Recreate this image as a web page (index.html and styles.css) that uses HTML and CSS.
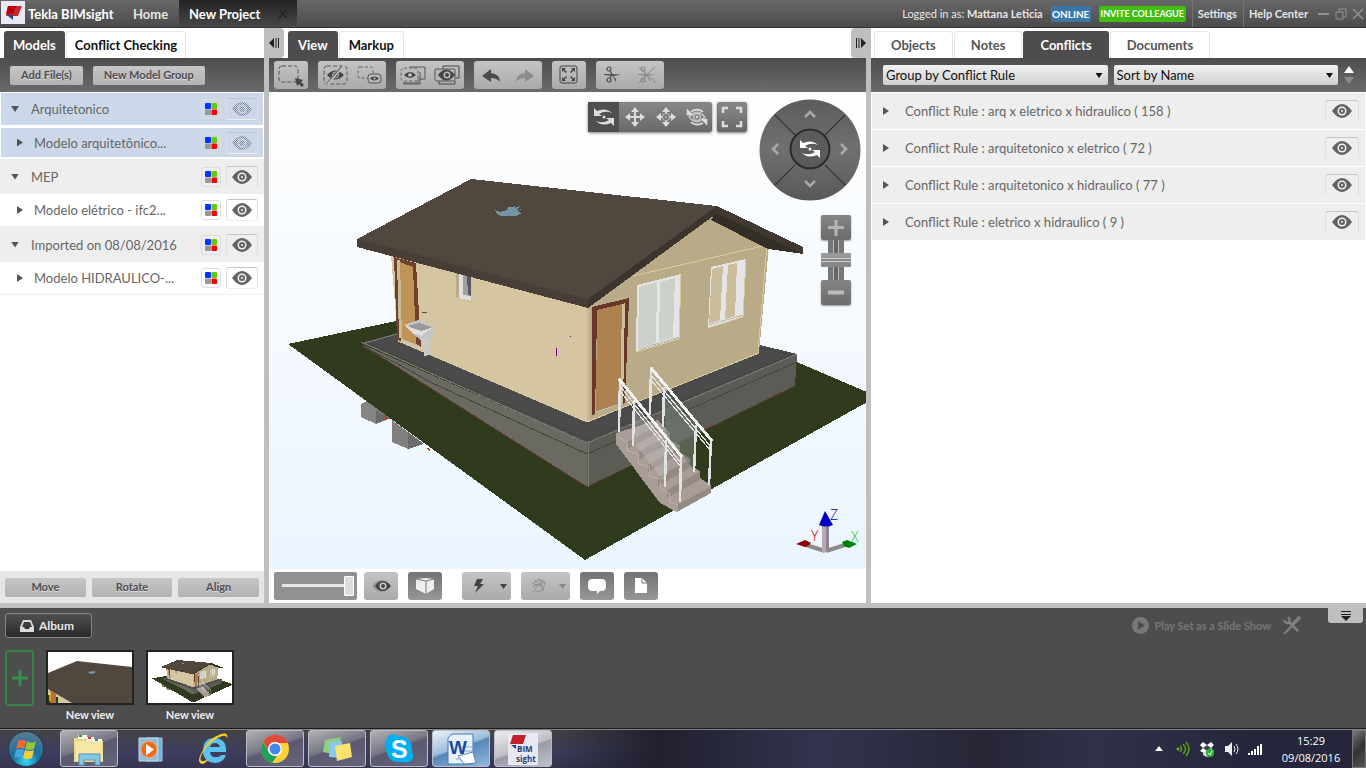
FILE: index.html
```html
<!DOCTYPE html>
<html lang="en">
<head>
<meta charset="utf-8">
<title>Tekla BIMsight</title>
<link rel="stylesheet" href="styles.css">
</head>
<body>
<svg class="defs" aria-hidden="true">
  <defs>
    <pattern id="dots" width="2" height="2" patternUnits="userSpaceOnUse"><rect width="1" height="1" fill="#80868e"/><rect x="1" y="1" width="1" height="1" fill="#80868e"/></pattern>
    <linearGradient id="sky" x1="0" y1="0" x2="0" y2="1"><stop offset="0" stop-color="#fefefe"/><stop offset="1" stop-color="#ebf5fe"/></linearGradient>
    <linearGradient id="wheel" x1="0" y1="0" x2="0" y2="1"><stop offset="0" stop-color="#5c5c5c"/><stop offset=".5" stop-color="#707070"/><stop offset="1" stop-color="#585858"/></linearGradient>
    <radialGradient id="orb" cx=".5" cy=".85" r=".85"><stop offset="0" stop-color="#35d8f5"/><stop offset=".45" stop-color="#1b6f9f"/><stop offset="1" stop-color="#5e7c90"/></radialGradient>
  </defs>
  <symbol id="eye" viewBox="0 0 20 14"><path d="M0 7Q5 0 10 0t10 7q-5 7-10 7T0 7z" fill="currentColor"/><circle cx="10" cy="7" r="4.500" fill="#f2f2f2"/><circle cx="10" cy="7" r="3" fill="currentColor"/><circle cx="10" cy="7" r="1" fill="#f2f2f2"/></symbol>
  <symbol id="eye-off" viewBox="0 0 20 14"><path d="M0 7Q5 0 10 0t10 7q-5 7-10 7T0 7z" fill="url(#dots)"/><circle cx="10" cy="7" r="4.500" fill="#ccd8e9"/><circle cx="10" cy="7" r="3" fill="url(#dots)"/></symbol>
  <symbol id="colors" viewBox="0 0 12 12"><rect width="6" height="6" rx="1" fill="#0433ff"/><rect x="6.500" width="5.500" height="6" rx="1" fill="#62cc00"/><rect y="6.500" width="6" height="5.500" rx="1" fill="#979797"/><rect x="6.500" y="6.500" width="5.500" height="5.500" rx="1" fill="#f00"/></symbol>
  <symbol id="orbit" viewBox="0 0 24 24"><path d="M2 3v8h8L7 9Q13 5 20 8 14 2 5 6zM22 21v-8h-8l3 2Q11 19 4 16q6 6 15 2z" fill="currentColor"/><circle cx="12" cy="12" r="1.500" fill="currentColor"/></symbol>
  <symbol id="pan" viewBox="0 0 24 24"><path d="M12 2l4 5h-3v4h4V8l5 4-5 4v-3h-4v4h3l-4 5-4-5h3v-4H7v3l-5-4 5-4v3h4V7H8z" fill="currentColor"/></symbol>
  <symbol id="move" viewBox="0 0 24 24"><path d="M12 2l4 5h-3v2h-2V7H8zM22 12l-5 4v-3h-2v-2h2V8zM12 22l-4-5h3v-2h2v2h3zM2 12l5-4v3h2v2H7v3z" fill="currentColor"/><circle cx="12" cy="12" r="3.500" fill="none" stroke="#b5b5b5" stroke-width="1.200"/><circle cx="12" cy="12" r="1" fill="#b5b5b5"/></symbol>
  <symbol id="look" viewBox="0 0 28 24"><g fill="none" stroke="#c0c0c0"><path d="M5 12q9-11 18 0-9 11-18 0z" stroke-width="2"/><circle cx="14" cy="12" r="4" stroke-width="2"/></g><g fill="none" stroke="currentColor"><path d="M7 6q7-5 14 0M21 19q-8 4-14-1" stroke-width="2"/></g><path d="M2 2v8h8zM26 22v-8h-8z" fill="currentColor"/><circle cx="14" cy="12" r="1.500" fill="currentColor"/></symbol>
  <symbol id="frame" viewBox="0 0 24 24"><path d="M8 3H3v5M16 3h5v5M8 21H3v-5M16 21h5v-5" fill="none" stroke="currentColor" stroke-width="2.500"/></symbol>
  <symbol id="scissors" viewBox="0 0 20 20"><g fill="none" stroke="currentColor" stroke-width="1.200"><circle cx="6" cy="4" r="2"/><circle cx="6" cy="15" r="2"/><path d="M7 6l3 5M7 13l2-4"/></g><path d="M1 9l17 .5L11 11 1 10zM9 10l4 7 0-3z" fill="currentColor"/></symbol>

  <symbol id="house" viewBox="269 92 597 477">
    <g shape-rendering="crispEdges">
    <path d="M361 404l6-3 24 17-15 6-15-7z" fill="#858585"/><path d="M376 410v14l14-6z" fill="#6a6a6a"/>
    <path d="M392 420l32 24-16 5-16-7z" fill="#808080"/><path d="M408 432v17l16-5z" fill="#6c6c6c"/>
    <path d="M385 415l3 4-2 1zM427 448l3 1v3z" fill="#d42800"/>
    <path d="M288 344l108-23 401 41 72 31v8L585 560z" fill="#303a1d"/>
    <path d="M361 343l36-10 363 12 37 9-210 89z" fill="#4b4b4b"/>
    <path d="M361 344l226 99v44l-27-17z" fill="#6b6a62"/>
    <path d="M587 443l210-89-2 32-208 101z" fill="#5b5c55"/>
    <g fill="none" stroke-width="1"><path d="M362 345l198 125 27 17 208-101" stroke="#5a3a2b"/><path d="M363 347q35 16 67 35l157 72 210-92M760 348l32 7-205 84-222-97" stroke="#444540"/><path d="M361 342l226 101 210-89M588 443v44M397 334l-32 9" stroke="#7c7b73"/></g>
    <path d="M391 255l197 52-1 115-189-81z" fill="#d5c5a0"/>
    <path d="M587 304l126-92 56 33-10 108-172 69z" fill="#b9ab88"/>
    <path d="M587 308v114l3-1v-114z" fill="#c7b993"/>
    <path d="M633 276l134-31-9 108M398 341l189 81 172-69" fill="none" stroke="#d8c99e"/>
    <path d="M394 257l22 6 5 84-5-2-3-75-13-4 1 75-4-1z" fill="#6e402e"/><path d="M400 262l13 5 3 78-15-6z" fill="#c09356"/><path d="M397 260h3l2 79-3-1z" fill="#c9bd96"/>
    <path d="M401 339l18 7" stroke="#bfc0bd"/>
    <path d="M456 273l15 4v25l-15-5z" fill="#b9ab88"/><path d="M459 274l12 3v24l-12-3z" fill="#dfdfdf"/><path d="M463 275l8 2v19l-8-1z" fill="#a0a0a0"/><path d="M467 276l4 1v19l-3-2z" fill="#585a59"/>
    <path d="M592 307l37-9-4 105-3 1 2-97-27 7-2 100-3 1z" fill="#67382a"/><path d="M597 310l25-6-2 101-24 7z" fill="#ad8251"/><path d="M622 304l3-1-2 101-3 1z" fill="#cec09c"/><path d="M596 412l24-8" stroke="#c2c3b9"/>
    <path d="M637 285l44-11-2 64-43 13z" fill="#e3e4e4"/><path d="M639 287l18-5-1 61-18 5zM660 282l15-4-2 59-14 5z" fill="#cdd1cc"/><path d="M681 275l-2 64-43 13" fill="none" stroke="#d8c99e"/>
    <path d="M711 267l35-8-3 57-35 12z" fill="#e5e5e6"/><path d="M712 269l11-3-3 54-11 4zM728 265l9-2-2 53-10 3z" fill="#c9bd9c"/><path d="M746 259l-3 58-35 11" fill="none" stroke="#d8c99e"/>
    <path d="M639 349l40-12M709 325l34-10" stroke="#b8b9b8"/>
    <path d="M471 179l246 27-129 93-231-60z" fill="#50473f"/><path d="M357 239l231 60v9l-231-61z" fill="#473e37"/><path d="M588 299l129-93-1 8-128 94z" fill="#3c352f"/>
    <path d="M717 206l86 41v7l-35-10-52-30z" fill="#403831"/><path d="M716 213l87 41-35-5-57-29z" fill="#342e28"/>
    <path d="M495 210l5 2 9-3-5-1 9-1 2-2v3l5-2-3 4 5-1-5 3 5 1-6 3h-14q-6-1-7-6z" fill="#7696a6"/>
    <path d="M422 313l5-1" stroke="#4d5135"/><path d="M556.500 348v8M570 336.500h1" stroke="#73008b"/>
    <path d="M404 325l14-5 16 6v12l-12 3-10-8z" fill="#c5c5c5"/><path d="M408 326l11-3 13 4-11 5z" fill="#999"/><path d="M404 325l17 6 12-4-12 9-9-3z" fill="#dedede"/><path d="M423 338h6v17l-5 1z" fill="#c9c9cb"/>
    <path d="M616 433l42-13 12 13v7l10 5v7l10 7v6l10 6v7l11 7v8l-34 19-17-9-44-59z" fill="#aa9d98"/>
    <path d="M627 442l31-17v8l-31 16zM638 452l32-17v8l-32 17zM648 465l32-18v7l-32 18zM658 477l32-17v8l-32 18zM667 490l33-18v8l-33 18zM678 504l33-17v6l-33 18z" fill="#958984"/>
    <path d="M618 436l9 7v8l11 3 1 10 10 3v9l11 3v9l9 5v9l9 3" fill="none" stroke="#beaea9"/>
    <path d="M663 387l33 40-2 44-28-38z" fill="#737b77" opacity=".6"/><path d="M633 403l33 38-1 42-31-40z" fill="#ced0cc" opacity=".3"/>
    <g fill="none" stroke="#e0e3e4" stroke-width="2.500"><path d="M651 367l-1 48M664 387l-1 40M696 425l-2 47M711 440l-2 45M620 378l-1 54M634 400l-1 46M666 440l-1 47M681 457l-1 45"/></g>
    <path d="M651 368l61 73M619 379l63 78" stroke="#f3f4f4" stroke-width="3"/><path d="M651 375l60 72M651 380l60 71M620 386l61 77M620 391l61 76" stroke="#e5e7e7" stroke-width="1.200"/>
    </g>
  </symbol>
</svg>

<header class="titlebar">
  <svg class="logo" viewBox="0 0 24 23"><path d="M0 0h24v23H0z" fill="#e9e8f4"/><path d="M7 5h14l-4 10H5z" fill="#c8252d"/><path d="M7 5h8l-3 8H5z" fill="#b70008"/><path d="M6 14h6v5z" fill="#174b8c"/></svg>
  <span class="product">Tekla BIMsight</span>
  <a class="home" href="#">Home</a>
  <div class="project"><span>New Project</span><button class="close" aria-label="Close project"><svg viewBox="0 0 10 10"><path d="M1 1l8 8M9 1L1 9" stroke="#222" stroke-width="1.500"/></svg></button></div>
  <div class="account">
    <span class="logged">Logged in as: <b>Mattana Leticia</b></span>
    <button class="badge online">ONLINE</button><button class="badge invite">INVITE COLLEAGUE</button>
    <a href="#" class="link">Settings</a><a href="#" class="link">Help Center</a>
    <div class="window-buttons">
      <button aria-label="Minimize"><svg viewBox="0 0 12 12"><path d="M0 6h11" stroke="#919191" stroke-width="2"/></svg></button>
      <button aria-label="Restore"><svg viewBox="0 0 12 12"><path d="M1 4h7v7H1zM4 4V1h7v8H8" fill="none" stroke="#919191"/></svg></button>
      <button aria-label="Close"><svg viewBox="0 0 12 12"><path d="M1 1l10 10M11 1L1 11" stroke="#919191" stroke-width="1.500"/></svg></button>
    </div>
  </div>
</header>

<main class="workspace">
  <section class="panel models">
    <nav class="tabs"><button class="tab active">Models</button><button class="tab">Conflict Checking</button></nav>
    <div class="bar actions"><button class="btn">Add File(s)</button><button class="btn">New Model Group</button></div>
    <ul class="tree">
      <li class="row group selected"><i class="open-mark"></i><span>Arquitetonico</span><button class="ico" aria-label="Color"><svg><use href="#colors"/></svg></button><button class="see" aria-label="Show"><svg><use href="#eye-off"/></svg></button></li>
      <li class="row child selected"><i class="closed-mark"></i><span>Modelo arquitetônico...</span><button class="ico" aria-label="Color"><svg><use href="#colors"/></svg></button><button class="see" aria-label="Show"><svg><use href="#eye-off"/></svg></button></li>
      <li class="row group"><i class="open-mark"></i><span>MEP</span><button class="ico" aria-label="Color"><svg><use href="#colors"/></svg></button><button class="see" aria-label="Hide"><svg><use href="#eye"/></svg></button></li>
      <li class="row child"><i class="closed-mark"></i><span>Modelo elétrico - ifc2...</span><button class="ico" aria-label="Color"><svg><use href="#colors"/></svg></button><button class="see" aria-label="Hide"><svg><use href="#eye"/></svg></button></li>
      <li class="row group"><i class="open-mark"></i><span>Imported on 08/08/2016</span><button class="ico" aria-label="Color"><svg><use href="#colors"/></svg></button><button class="see" aria-label="Hide"><svg><use href="#eye"/></svg></button></li>
      <li class="row child"><i class="closed-mark"></i><span>Modelo HIDRAULICO-...</span><button class="ico" aria-label="Color"><svg><use href="#colors"/></svg></button><button class="see" aria-label="Hide"><svg><use href="#eye"/></svg></button></li>
    </ul>
    <div class="transform"><button class="btn">Move</button><button class="btn">Rotate</button><button class="btn">Align</button></div>
  </section>

  <div class="splitter"><button class="handle to-left" aria-label="Collapse models"><svg viewBox="0 0 12 12"><path d="M6 1v10L1 6z" fill="#222"/><path d="M8 1v10M10.500 1v10" stroke="#222"/></svg></button></div>

  <section class="panel view">
    <nav class="tabs"><button class="tab active">View</button><button class="tab">Markup</button></nav>
    <div class="bar tools">
      <button class="tool" aria-label="Select area"><svg viewBox="0 0 34 28"><rect x="5" y="5" width="19" height="16" rx="3" fill="none" stroke="#555" stroke-dasharray="4 2"/><path d="M21 17l8 2-2 2 3 3-2 2-3-3-2 2z" fill="#444"/></svg></button>
      <div class="pair"><button class="tool" aria-label="Hide selected"><svg viewBox="0 0 34 28"><rect x="6" y="5" width="23" height="18" rx="3" fill="none" stroke="#555" stroke-dasharray="4 2"/><path d="M9 14q8-9 17 0-9 9-17 0z" fill="#444"/><circle cx="17.500" cy="14" r="3" fill="none" stroke="#bbb"/><path d="M25 5L9 23" stroke="#bbb" stroke-width="3"/><path d="M24 5L9 22" stroke="#444"/></svg></button><button class="tool" aria-label="Show only selected"><svg viewBox="0 0 34 28"><rect x="6" y="6" width="15" height="11" rx="2" fill="none" stroke="#666" stroke-dasharray="3 2"/><rect x="16" y="13" width="13" height="9" rx="3" fill="#b8b8b8" stroke="#555"/><path d="M18 17.500q4-4 9 0-5 4-9 0z" fill="#444"/><circle cx="22.500" cy="17.500" r="1" fill="#ccc"/></svg></button></div>
      <div class="pair"><button class="tool" aria-label="Show hidden"><svg viewBox="0 0 34 28"><path d="M14 10V6h15v12h-5M8 22h14v-5" fill="none" stroke="#555"/><path d="M8 21v2h16V11" fill="none" stroke="#555"/><rect x="5" y="7" width="17" height="13" rx="3" fill="#b8b8b8" stroke="#666" stroke-dasharray="3 2"/><path d="M8 14q6-6 12 0-6 6-12 0z" fill="#444"/><circle cx="14" cy="14" r="1.800" fill="#ccc"/></svg></button><button class="tool" aria-label="Show all"><svg viewBox="0 0 34 28"><path d="M13 8V5h16v12h-3M9 20v3h16v-3" fill="none" stroke="#444"/><rect x="5" y="8" width="20" height="12" rx="1" fill="#b8b8b8" stroke="#555"/><path d="M8 14q8-11 17 0-9 11-17 0z" fill="#444"/><circle cx="17" cy="14" r="3.500" fill="#bbb"/><circle cx="17" cy="14" r="2" fill="#444"/></svg></button></div>
      <div class="pair"><button class="tool" aria-label="Undo"><svg viewBox="0 0 34 28"><path d="M8 15l9-7v4q9 1 9 9-3-4-9-4v4z" fill="#4c4c4c"/></svg></button><button class="tool" aria-label="Redo"><svg viewBox="0 0 34 28"><path d="M26 15l-9-7v4q-9 1-9 9 3-4 9-4v4z" fill="#8c8c8c"/></svg></button></div>
      <button class="tool" aria-label="Fit view"><svg viewBox="0 0 34 28"><rect x="8" y="5" width="17" height="17" rx="2" fill="none" stroke="#444"/><path d="M10 7h4l-1.500 1.500L15 11l-1 1-2.500-2.500L10 11zM23 7v4l-1.500-1.500L19 12l-1-1 2.500-2.500L19 7zM10 20v-4l1.500 1.500L14 15l1 1-2.500 2.500L14 20zM23 20h-4l1.500-1.500L18 16l1-1 2.500 2.500L23 16z" fill="#444"/></svg></button>
      <div class="pair"><button class="tool dark" aria-label="Clip"><svg viewBox="-7 -4 34 28"><use href="#scissors" width="20" height="20"/></svg></button><button class="tool faded" aria-label="Remove clip"><svg viewBox="-7 -4 34 28"><use href="#scissors" width="20" height="20"/><path d="M2 2l17 16M18 2L2 18" stroke="currentColor"/></svg></button></div>
    </div>
    <div class="viewport">
      <svg class="scene" viewBox="269 92 597 477" preserveAspectRatio="xMidYMid slice">
        <path d="M269 92h597v477H269z" fill="url(#sky)"/>
        <use href="#house" x="269" y="92" width="597" height="477"/>
        <path d="M825 551l-22-7M826 551l22-7" stroke="#8e8989" stroke-width="4"/><path d="M822 526h7v26h-7z" fill="#b4a9b4"/><path d="M826 526h3v26h-3z" fill="#8f858f"/><path d="M825 511l8 14q-7 3-14 0z" fill="#0000c4"/><path d="M796 544l9-4 6 3-3 3-3 1z" fill="#8e0000"/><path d="M857 544l-10-4-5 2 2 4 5 2z" fill="#008200"/>
        <text x="830" y="520" class="axis z">Z</text><text x="811" y="541" class="axis y">Y</text><text x="851" y="542" class="axis x">X</text>
      </svg>
      <div class="nav-tools"><div class="nav-group"><button class="pressed" aria-label="Orbit"><svg><use href="#orbit"/></svg></button><button aria-label="Pan"><svg><use href="#pan"/></svg></button><button aria-label="Move"><svg><use href="#move"/></svg></button><button aria-label="Look"><svg><use href="#look"/></svg></button></div><div class="nav-group single"><button aria-label="Full screen"><svg><use href="#frame"/></svg></button></div></div>
      <svg class="wheel" viewBox="0 0 102 102"><circle cx="51" cy="51" r="50.500" fill="url(#wheel)"/><path d="M16 16l20 20M86 16L66 36M16 86l20-20M86 86L66 66" stroke="#3a3a3a" stroke-width="1.500"/><circle cx="51" cy="50" r="19.500" fill="#5b5b5b" stroke="#2b2b2b" stroke-width="2"/><path d="M46 18l5-5 5 5M46 82l5 5 5-5M19 45l-5 5 5 5M82 45l5 5-5 5" fill="none" stroke="#aaa" stroke-width="2.500"/><use href="#orbit" x="39" y="38" width="24" height="24" color="#fff"/></svg>
      <div class="zoomer"><button aria-label="Zoom in"><svg viewBox="0 0 30 25"><path d="M7 12.500h16M15 5v16" stroke="#b5b5b5" stroke-width="3"/></svg></button><input type="range" aria-label="Zoom" value="50"><button aria-label="Zoom out"><svg viewBox="0 0 30 25"><path d="M7 12.500h16" stroke="#bdbdbd" stroke-width="4"/></svg></button></div>
    </div>
    <div class="view-bar">
      <div class="slider"><input type="range" aria-label="Transparency" value="100"></div>
      <button class="tool dark" aria-label="Visibility"><svg viewBox="0 0 34 28"><path d="M8 14q4-6 9-6 6 0 9 6-3 6-9 6-5 0-9-6z" fill="#999"/><path d="M11 14q3-5 8-5 4 0 8 5-4 5-8 5-5 0-8-5z" fill="#444"/><circle cx="19" cy="14" r="3.500" fill="#ccc"/><circle cx="19" cy="14" r="2" fill="#444"/></svg></button>
      <button class="tool deep" aria-label="Perspective"><svg viewBox="0 0 34 28"><path d="M8 7l9-1 9 1v10l-8 5-10-5z" fill="#eee"/><path d="M8 7l10 2 8-2M18 9v13" stroke="#777" fill="none"/></svg></button>
      <button class="tool split first" aria-label="Conflict display"><svg viewBox="0 0 49 28"><path d="M15 7h6l-3 5h4l-9 9 3-7h-4z" fill="#444"/><path d="M38 12h7l-3.500 5z" fill="#444"/></svg></button>
      <button class="tool split" aria-label="Measure"><svg viewBox="0 0 49 28"><path d="M11 12l7-5 6 3-2 8-7 2M14 8l9 10M18 7l4 12M12 15l12-5M12 12l10 1M12 20l10-12" fill="none" stroke="#8f8f8f"/><path d="M38 12h7l-3.500 5z" fill="#8a8a8a"/></svg></button>
      <button class="tool deep" aria-label="Notes"><svg viewBox="0 0 34 28"><path d="M12 7h10q4 0 4 5v2q0 5-4 5h-2l-3 3v-3h-5q-4 0-4-5v-2q0-5 4-5z" fill="#fff"/></svg></button>
      <button class="tool deep" aria-label="Documents"><svg viewBox="0 0 34 28"><path d="M11 6h7l5 5v10H11z" fill="#fff"/><path d="M18 6v5h5" fill="none" stroke="#777"/></svg></button>
    </div>
  </section>

  <div class="splitter"><button class="handle to-right" aria-label="Collapse conflicts"><svg viewBox="0 0 12 12"><path d="M6 1v10l5-5z" fill="#222"/><path d="M4 1v10M1.500 1v10" stroke="#222"/></svg></button></div>

  <section class="panel conflicts">
    <nav class="tabs"><button class="tab">Objects</button><button class="tab">Notes</button><button class="tab active">Conflicts</button><button class="tab">Documents</button></nav>
    <div class="bar filters">
      <div class="select"><select aria-label="Group by"><option>Group by Conflict Rule</option></select></div>
      <div class="select"><select aria-label="Sort by"><option>Sort by Name</option></select></div>
      <div class="order"><button class="up" aria-label="Ascending"></button><button class="dn" aria-label="Descending"></button></div>
    </div>
    <ul class="rules">
      <li><i class="closed-mark"></i><span>Conflict Rule : arq x eletrico x hidraulico ( 158 )</span><button class="see" aria-label="Hide"><svg><use href="#eye"/></svg></button></li>
      <li><i class="closed-mark"></i><span>Conflict Rule : arquitetonico x eletrico ( 72 )</span><button class="see" aria-label="Hide"><svg><use href="#eye"/></svg></button></li>
      <li><i class="closed-mark"></i><span>Conflict Rule : arquitetonico x hidraulico ( 77 )</span><button class="see" aria-label="Hide"><svg><use href="#eye"/></svg></button></li>
      <li><i class="closed-mark"></i><span>Conflict Rule : eletrico x hidraulico ( 9 )</span><button class="see" aria-label="Hide"><svg><use href="#eye"/></svg></button></li>
    </ul>
  </section>
</main>

<section class="album">
  <div class="album-head">
    <button class="album-btn"><svg viewBox="0 0 14 12"><path d="M3 0h8l3 7v5H0V7zM4 2L2 7h2l1 2h4l1-2h2l-2-5z" fill="#ddd" fill-rule="evenodd"/></svg>Album</button>
    <button class="play"><svg viewBox="0 0 17 17"><circle cx="8.500" cy="8.500" r="8.500" fill="#787878"/><path d="M6 4l7 4.500L6 13z" fill="#4d4d4d"/></svg>Play Set as a Slide Show</button>
    <button class="settings" aria-label="Slide show settings"><svg viewBox="0 0 18 18"><path d="M5 5l10 10" stroke="#808080" stroke-width="2.500"/><path d="M1 4q1 4 5 3 2-3-1-6" fill="none" stroke="#808080" stroke-width="2"/><path d="M17 1L9 9" stroke="#808080" stroke-width="3.500"/><path d="M9 10l-8 8" stroke="#808080" stroke-width="2"/></svg></button>
    <button class="fold" aria-label="Collapse album"><svg viewBox="0 0 12 10"><path d="M1 .5h10M1 3.500h10" stroke="#222"/><path d="M1 5h10L6 10z" fill="#222"/></svg></button>
  </div>
  <div class="views">
    <button class="add" aria-label="Add view"><svg viewBox="0 0 16 16"><path d="M8 0v16M0 8h16" stroke="#369048" stroke-width="3"/></svg></button>
    <figure><svg viewBox="0 0 84 51" preserveAspectRatio="none"><path d="M0 0h84v51H0z" fill="#fff"/><path d="M0 36l24 15H0z" fill="#d5c5a0"/><path d="M2 38l6 4v9H2z" fill="#b56f37"/><path d="M0 43h2v8H0zM8 45h2v6H8z" fill="#303a1d"/><path d="M2 40v9" stroke="#ff0"/><path d="M0 21L29 9l55 6v36H24L0 37z" fill="#50473f"/><path d="M39 20l8-1v2l-4 1z" fill="#7696a6"/></svg><figcaption>New view</figcaption></figure>
    <figure><svg viewBox="259 108 608 455" preserveAspectRatio="none"><path d="M259 108h608v455H259z" fill="#fff"/><use href="#house" x="269" y="92" width="597" height="477"/></svg><figcaption>New view</figcaption></figure>
  </div>
</section>

<footer class="taskbar">
  <button class="start" aria-label="Start"><svg viewBox="0 0 36 36"><circle cx="18" cy="18" r="17.500" fill="url(#orb)" stroke="#263846"/><path d="M10 10q4-2 8 0l-2 8q-4-2-8 0z" fill="#ef6a35"/><path d="M19 10q5 3 9 0l-2 8q-4 2-9 0z" fill="#8fc73e"/><path d="M8 19q4-2 8 0l-2 8q-4-2-8 0z" fill="#45a6e0"/><path d="M17 19q4 2 9 0l-2 8q-5 2-9 0z" fill="#fccb38"/></svg></button>
  <button class="task open" aria-label="Explorer"><svg viewBox="0 0 34 34"><path d="M2 6h10l2 3h17v21H2z" fill="#eed682"/><path d="M6 3h9v4H6zM14 5h8v4h-8zM22 7h8v4h-8z" fill="#f9f9f0"/><path d="M7 3h3v2H7z" fill="#25a12c"/><path d="M16 5h3v2h-3z" fill="#e43b20"/><path d="M23 7h3v2h-3z" fill="#2c8dd1"/><path d="M3 9h26l2 20H4z" fill="#f6e7a5"/><path d="M7 33V22h21v11h-5v-5H12v5z" fill="#86c8e4" stroke="#4d96ba"/></svg></button>
  <button class="task" aria-label="Media player"><svg viewBox="0 0 34 34"><path d="M12 6h16v23H12z" fill="#6fb1d6" stroke="#9bd0ea"/><path d="M5 6h19v23H5z" fill="#96bdd6" stroke="#bbdced"/><circle cx="15" cy="17.500" r="8" fill="#ee6815" stroke="#f8a35d"/><path d="M12 12l8 5.500-8 6z" fill="#fff"/></svg></button>
  <button class="task" aria-label="Internet Explorer"><svg viewBox="0 0 34 34"><path d="M30 20H14q1 6 6 5 4 0 5-2h5q-3 8-11 8-12-1-12-12Q7 6 19 6q12 1 11 14zm-6-5q-1-4-5-4t-5 4z" fill="#5bc1ee" fill-rule="evenodd"/><path d="M6 32q-6-2 0-12Q13 6 25 2q8-2 6 5 0-4-5-3Q13 9 6 22q-4 8 2 7 3-1 5-2-4 5-7 5z" fill="#f8cf24"/></svg></button>
  <button class="task open" aria-label="Chrome"><svg viewBox="0 0 34 34"><circle cx="17" cy="17" r="14" fill="#ffd03b"/><path d="M5 10A14 14 0 0 1 30 11H17L12 21z" fill="#de4b3d"/><path d="M5 10l7 12 7 2-5 7A14 14 0 0 1 5 10z" fill="#1ea05c"/><circle cx="17" cy="17" r="7" fill="#fff"/><circle cx="17" cy="17" r="5.500" fill="#4587ee"/></svg></button>
  <button class="task open" aria-label="Sticky notes"><svg viewBox="0 0 34 34"><path d="M5 8l16-3-3 18L3 20z" fill="#8ccf7e"/><path d="M10 10l12-1v17l-13-1z" fill="#8ac6ee"/><path d="M15 14l15-3 2 14-15 4z" fill="#f8e36c"/></svg></button>
  <button class="task open" aria-label="Skype"><svg viewBox="0 0 34 34"><path d="M8 3q4-2 8 1 12-1 14 11 0 3 0 5 3 5-1 9-4 3-9 1Q6 32 4 17q-2-10 4-14z" fill="#00aff0"/><text x="9" y="26" class="skype">S</text></svg></button>
  <button class="task open word" aria-label="Word"><svg viewBox="0 0 34 34"><path d="M8 2h21v30H4V6z" fill="#e9f1fa" stroke="#3d7abf"/><path d="M15 15h15M15 19h15M12 27h17" stroke="#8aa9d4"/><text x="5" y="22" class="w">W</text><path d="M14 24l15-4 3 11-12 1z" fill="#fff" stroke="#5985bd"/></svg></button>
  <button class="task open light" aria-label="BIMsight"><svg viewBox="0 0 34 34"><path d="M2 1h30v32H2z" fill="#e9e8f2"/><path d="M7 3h13l-3 9H4z" fill="#c41f28"/><path d="M5 13h5v4z" fill="#174b8c"/><text x="11" y="20" class="bim">BIM</text><text x="10" y="30" class="bim">sight</text></svg></button>
  <div class="tray">
    <svg class="caret" viewBox="0 0 8 5"><path d="M4 0l4 5H0z" fill="#fff"/></svg>
    <svg viewBox="0 0 16 16"><circle cx="3" cy="8" r="1.500" fill="#6eb817"/><path d="M5 5q3 3 0 6M8 3q5 5 0 10M11 1q6 7 0 14" fill="none" stroke="#5a9c15" stroke-width="1.500"/></svg>
    <svg viewBox="0 0 16 16"><path d="M4 1l4 3 4-3 3 3-3 3 3 3-4 2-3-2-3 2-4-2 3-3-3-3z" fill="#fff"/><path d="M4 12l4-2 4 2v2l-4 2-4-2z" fill="#ddd"/><path d="M8 4l4 3-4 3-4-3z" fill="#444"/><circle cx="11" cy="12" r="4" fill="#28b52e"/><path d="M9 12l2 2 2-4" fill="none" stroke="#fff"/></svg>
    <svg viewBox="0 0 16 16"><path d="M2 5h3l4-4v14l-4-4H2z" fill="#eee"/><path d="M11 5q2 3 0 6M13 3q4 5 0 10" fill="none" stroke="#eee"/></svg>
    <svg viewBox="0 0 16 16"><path d="M1 12h2v2H1zM4 10h2v4H4zM7 8h2v6H7zM10 5h2v9h-2zM13 3h2v11h-2z" fill="#fff"/></svg>
  </div>
  <time class="clock">15:29<br>09/08/2016</time>
  <button class="desktop" aria-label="Show desktop"></button>
</footer>
</body>
</html>
```
FILE: styles.css
```css
* { box-sizing: border-box; }
body { margin: 0; min-height: 100vh; display: flex; flex-direction: column; background: #fff; color: #666; font-family: Lato, "Open Sans", sans-serif; font-size: 13px; line-height: 16px; }
button, select, input { font: inherit; margin: 0; padding: 0; border: 0; background: none; color: inherit; }
a { color: inherit; text-decoration: none; }
ul { list-style: none; margin: 0; padding: 0; }
svg { display: block; }
.defs { position: absolute; width: 0; height: 0; }

/* Title bar */
.titlebar { display: flex; height: 28px; background: linear-gradient(#686868, #4b4b4b); border-bottom: 1px solid #333; color: #e6e6e6; font-size: 11px; font-weight: 700; align-items: center; }
.logo { width: 24px; height: 23px; margin: 0 3px 3px 1px; }
.product { width: 105px; font-size: 13px; color: #fff; white-space: nowrap; }
.home { width: 46px; font-size: 13px; }
.project { display: flex; align-items: center; justify-content: space-between; width: 118px; height: 27px; padding: 0 9px 0 10px; background: linear-gradient(#232323, #484848); color: #fff; font-size: 13px; }
.close svg { width: 10px; height: 10px; }
.account { display: flex; align-items: center; margin-left: auto; height: 27px; }
.logged { font-weight: 400; margin-right: 8px; }
.badge { height: 16px; border-radius: 2px; color: #fff; font-size: 10px; font-weight: 700; line-height: 16px; }
.online { width: 40px; background: #3a77a8; margin-right: 8px; }
.invite { width: 87px; background: #43bd0c; margin-right: 6px; font-size: 9px; }
.link { border-left: 1px solid #737373; height: 27px; line-height: 27px; padding: 0 6px 0 5px; white-space: nowrap; }
.window-buttons { display: flex; gap: 5px; padding: 0 2px 0 4px; }
.window-buttons svg { width: 12px; height: 12px; }

/* Three-column workspace */
.workspace { flex: 1; display: grid; grid-template-columns: 264px 5px minmax(0, 1fr) 5px 495px; }
.panel { display: flex; flex-direction: column; min-width: 0; }
.splitter { background: #bfbfbf; position: relative; z-index: 2; }
.handle { position: absolute; top: 0; width: 20px; height: 30px; background: #bfbfbf; display: flex; align-items: center; justify-content: center; }
.handle svg { width: 12px; height: 12px; }
.handle.to-left { left: 0; border-radius: 0 4px 4px 0; }
.handle.to-right { right: 0; border-radius: 4px 0 0 4px; }
.tabs { display: flex; align-items: flex-end; height: 30px; gap: 1px; padding-left: 4px; }
.view .tabs { padding-left: 19px; }
.conflicts .tabs { padding-left: 3px; }
.tab { height: 27px; padding: 0 8px; border: 1px solid #e6e6e6; border-bottom: 0; border-radius: 3px 3px 0 0; background: #fff; color: #111; font-size: 13px; font-weight: 700; white-space: nowrap; }
.tab.active { background: #4d4d4d; border-color: #4d4d4d; color: #fff; }
.view .tab { padding: 0 9px; }
.conflicts .tab { padding: 0 16px; color: #555; }
.conflicts .tab.active { color: #fff; }
.bar { display: flex; height: 34px; align-items: center; background: linear-gradient(#4d4d4d, #6b6b6b); }
.btn { height: 19px; border-radius: 2px; background: linear-gradient(#c6c6c6, #b2b2b2); color: #4e4e4e; font-size: 11px; font-weight: 700; text-shadow: 0 1px 0 #ddd; padding: 0 11px; white-space: nowrap; }
.actions { gap: 10px; padding-left: 10px; }

/* Model tree and rules */
.tree { flex: 1; }
.row { display: flex; align-items: center; padding: 0 6px 0 11px; }
.row span { flex: 1; min-width: 0; overflow: hidden; white-space: nowrap; margin-right: 22px; }
.row.group { height: 35px; background: #eee; }
.row.child { height: 33px; padding-left: 17px; border-bottom: 1px solid #eee; background: #fff; }
.row.selected { background: #ccd8e9; border: 1px solid #fff; border-bottom: 2px solid #fff; padding-right: 5px; padding-left: 10px; }
.row.child.selected { padding-left: 16px; height: 32px; }
.open-mark { width: 8px; height: 6px; background: #555; clip-path: polygon(0 0, 100% 0, 50% 100%); margin-right: 12px; }
.closed-mark { width: 6px; height: 8px; background: #555; clip-path: polygon(0 0, 100% 50%, 0 100%); margin-right: 11px; }
.ico, .see { display: flex; align-items: center; justify-content: center; border: 1px solid #ddd; border-radius: 3px; }
.ico { width: 20px; height: 20px; margin-right: 5px; }
.ico svg { width: 12px; height: 12px; }
.see { width: 32px; height: 22px; border-top-color: #c4c4c4; border-bottom-color: #eee; color: #636363; }
.see svg { width: 20px; height: 14px; }
.transform { display: grid; grid-template-columns: repeat(3, 1fr); gap: 6px; height: 32px; align-items: center; background: #e6e6e6; padding: 0 5px; }
.rules { padding: 1px 1px 0; }
.rules li { display: flex; align-items: center; height: 36px; margin-bottom: 1px; background: #eee; padding: 0 6px 0 11px; }
.rules .closed-mark { margin-right: 16px; }
.rules .see { width: 34px; margin-left: auto; }

/* View tools */
.tools { gap: 10px; padding-left: 5px; }
.pair { display: flex; background: linear-gradient(#c4c4c4, #aaa); border-radius: 3px; }
.tool { width: 34px; height: 28px; border-radius: 3px; background: linear-gradient(#c4c4c4, #aaa); }
.tool svg { width: 100%; height: 28px; }
.pair .tool { background: none; }
.tool.dark { color: #4c4c4c; }
.tool.faded { color: #8a8a8a; }
.tool.deep { background: linear-gradient(#737373, #979797); }
.tool.split { width: 49px; }
.tool.first { margin-left: 10px; }
.viewport { position: relative; flex: 1; min-height: 0; overflow: hidden; }
.scene { position: absolute; inset: 0; width: 100%; height: 100%; }
.axis { font-family: "Open Sans", sans-serif; font-size: 14px; font-weight: 300; }
.axis.z { fill: #0000c0; }
.axis.y { fill: #d00000; }
.axis.x { fill: #00c800; }
.nav-tools { position: absolute; top: 10px; right: 119px; display: flex; gap: 5px; }
.nav-group { display: flex; border-radius: 2px; background: linear-gradient(#888, #686868); box-shadow: 0 1px 3px #777; color: #ddd; }
.nav-group button { display: flex; align-items: center; justify-content: center; width: 31px; height: 30px; }
.nav-group.single button { width: 30px; }
.nav-group .pressed { background: #4f4f4f; }
.nav-group svg { width: 24px; height: 24px; }
.wheel { position: absolute; top: 7px; right: 5px; width: 102px; height: 102px; }
.zoomer { position: absolute; top: 123px; right: 15px; display: flex; flex-direction: column; width: 30px; }
.zoomer button { height: 25px; border-radius: 2px; background: linear-gradient(#858585, #6c6c6c); box-shadow: 0 1px 2px #999; }
.zoomer input { appearance: none; writing-mode: vertical-lr; width: 30px; height: 40px; background: linear-gradient(90deg, transparent 7px, #777 7px, #777 12px, #bbb 12px, #bbb 13px, #666 13px, #666 17px, #bbb 17px, #bbb 18px, #777 18px, #777 23px, transparent 23px); }
.zoomer input::-webkit-slider-thumb { appearance: none; width: 30px; height: 14px; border-radius: 1px; background: linear-gradient(#999 5px, #ccc 5px, #ccc 6px, #888 6px, #888 8px, #ccc 8px, #ccc 9px, #888 9px); }
.view-bar { display: flex; gap: 10px; align-items: center; height: 34px; padding-left: 5px; }
.slider { width: 83px; height: 28px; margin-right: -3px; padding: 0 3px 0 8px; border-radius: 2px; background: #919191; }
.slider input { appearance: none; display: block; width: 100%; height: 28px; background: linear-gradient(transparent 12px, #e8e8e8 12px, #e8e8e8 15px, transparent 15px); }
.slider input::-webkit-slider-thumb { appearance: none; width: 10px; height: 20px; border: 1px solid #fff; border-radius: 1px; background: #ddd; }

/* Filters */
.filters { gap: 6px; padding: 0 12px; }
.select { position: relative; flex: 1; }
.select::after { content: ""; position: absolute; right: 5px; top: 8px; width: 7px; height: 5px; background: #111; clip-path: polygon(0 0, 100% 0, 50% 100%); pointer-events: none; }
.select select { appearance: none; display: block; width: 100%; height: 20px; padding: 0 3px; border-radius: 2px; background: linear-gradient(#f2f2f2, #cfcfcf); color: #111; }
.order { display: flex; flex-direction: column; gap: 4px; width: 10px; }
.order button { height: 7px; background: #fff; clip-path: polygon(50% 0, 100% 100%, 0 100%); }
.order .dn { background: #8b8b8b; clip-path: polygon(0 0, 100% 0, 50% 100%); }

/* Album */
.album { height: 125px; border-top: 5px solid #bfbfbf; background: #4d4d4d; font-size: 11px; font-weight: 700; }
.album-head { display: flex; align-items: flex-start; padding: 0 3px 0 5px; }
.album-btn { display: flex; align-items: center; gap: 5px; width: 87px; height: 25px; margin-top: 5px; padding-left: 14px; border: 1px solid #848484; border-radius: 3px; background: linear-gradient(#505050, #292929); color: #e7e7e7; font-size: 12px; }
.album-btn svg { width: 14px; height: 12px; }
.play { display: flex; align-items: center; gap: 5px; margin: 9px 12px 0 auto; color: #777; }
.play svg { width: 17px; height: 17px; }
.settings { margin: 8px 27px 0 0; }
.settings svg { width: 18px; height: 18px; }
.fold { display: flex; align-items: center; justify-content: center; width: 35px; height: 15px; background: #bfbfbf; border-radius: 0 0 3px 3px; }
.fold svg { width: 12px; height: 10px; }
.views { display: flex; align-items: flex-start; gap: 12px; padding: 12px 5px 0; }
.add { display: flex; align-items: center; justify-content: center; width: 29px; height: 56px; border: 2px solid #338344; border-radius: 3px; }
.add svg { width: 16px; height: 16px; }
.views figure { width: 88px; margin: 0; text-align: center; color: #eee; }
.views figure svg { width: 88px; height: 55px; border: 2px solid #222; }
.views figcaption { margin-top: 2px; }

/* Taskbar */
.taskbar { display: flex; align-items: center; gap: 4px; height: 40px; padding-left: 8px; border-top: 1px solid #1b1b1b; box-shadow: inset 0 1px 0 #858585; background: linear-gradient(90deg, transparent 40%, #20202e 48%, #33334f 60%, #262636 72%, #30304a 80%, #25263b 92%), linear-gradient(#444, #3e3d5e 60%, #353450); }
.start { width: 36px; margin-right: 12px; }
.start svg { width: 36px; height: 36px; }
.task { display: flex; align-items: center; justify-content: center; width: 58px; height: 37px; }
.task svg { width: 34px; height: 34px; }
.task.open { border: 1px solid #bcbcc6; border-radius: 3px; background: linear-gradient(160deg, #b1b1b5, #777784 45%, #5a596f 50%, #66657a); }
.task.word { background: linear-gradient(160deg, #eef4fa, #9dbcda 45%, #5588b8 50%, #94b9de); }
.task.light { background: linear-gradient(160deg, #ededf2, #bdbdc3 50%, #9b9ba6 52%, #c0c0c9); }
.skype { font: 700 25px "Liberation Sans", sans-serif; fill: #fff; }
.w { font: 700 19px "Liberation Sans", sans-serif; fill: #174a9b; }
.bim { font: 700 8px "Open Sans", sans-serif; fill: #173b72; }
.tray { display: flex; align-items: center; gap: 8px; margin-left: auto; margin-right: 12px; }
.tray svg { width: 16px; height: 16px; }
.tray .caret { width: 8px; height: 5px; margin-right: 4px; }
.clock { width: 64px; text-align: center; color: #fff; font-family: "Open Sans", sans-serif; font-size: 11px; line-height: 17px; }
.desktop { width: 14px; height: 38px; margin-left: 5px; border: 1px solid #777; background: linear-gradient(135deg, #777, #333 50%, #555); }
```
